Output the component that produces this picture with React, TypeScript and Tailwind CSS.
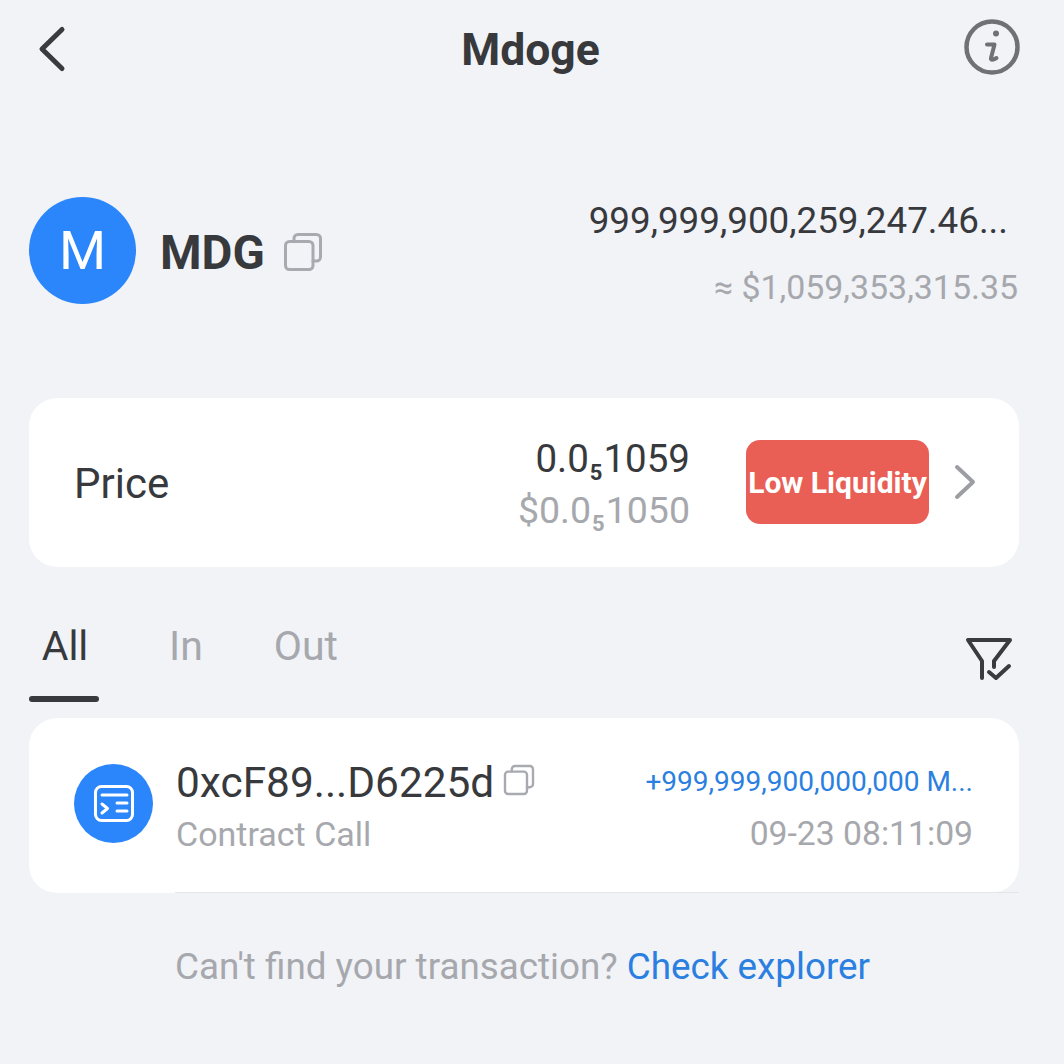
import React from "react";

const font = "font-['Roboto',sans-serif]";

const CopyIcon = ({ className }: { className: string }) => (
  <svg viewBox="0 0 40 40" fill="none" stroke="#a8aaaf" strokeWidth="3" className={className}>
    <path d="M11 9V6.5A4 4 0 0 1 15 2.5h18.5a4 4 0 0 1 4 4V25a4 4 0 0 1-4 4H30" strokeLinecap="round" />
    <rect x="2.5" y="9.5" width="27.5" height="28" rx="4" />
  </svg>
);

const Sub = () => <span className="text-[22px] font-bold align-[-8px] leading-none mx-[1px]">5</span>;

const App = () => {
  return (
    <div className={`${font} w-[1064px] h-[1064px] bg-[#f1f3f7] overflow-hidden text-[#38393d]`}>
      <div className="h-[100px] flex items-center justify-between pl-[36px] pr-[44px]">
        <svg viewBox="0 0 32 50" fill="none" stroke="#3a3b3f" strokeWidth="5" className="w-[32px] h-[50px] -mt-[4px]">
          <path d="M26 6.5 6 26 26 45.5" strokeLinecap="round" strokeLinejoin="round" />
        </svg>
        <div className="text-[44.5px] font-bold mt-[1px] ml-[29px]">Mdoge</div>
        <svg viewBox="0 0 56 56" fill="none" className="w-[56px] h-[56px] -mt-[6px]">
          <circle cx="28" cy="28" r="25.5" stroke="#6f7175" strokeWidth="4.5" />
          <circle cx="32" cy="14.5" r="3" fill="#6f7175" />
          <path d="M23 25.5h7.5L27 39c-.5 2 1.5 2.5 5.5 0" stroke="#6f7175" strokeWidth="4" strokeLinecap="round" strokeLinejoin="round" />
        </svg>
      </div>

      <div className="flex items-start justify-between pl-[29px] pr-[46px] mt-[97px]">
        <div className="flex items-center">
          <div className="w-[107px] h-[107px] rounded-full bg-[#2b85fb] text-white text-[54px] flex items-center justify-center">M</div>
          <div className="text-[47.5px] font-bold ml-[24px] mt-[7px]">MDG</div>
          <CopyIcon className="w-[40px] h-[40px] ml-[18px] mt-[2px]" />
        </div>
        <div className="text-right">
          <div className="text-[36.8px] leading-[46px] mr-[10px] mt-[1px]">999,999,900,259,247.46...</div>
          <div className="text-[33.9px] leading-[46px] text-[#a6a8ad] mt-[21px]">≈ $1,059,353,315.35</div>
        </div>
      </div>

      <div className="ml-[29px] mr-[45px] mt-[87px] h-[169px] bg-white rounded-[28px] flex items-center pl-[45px] pr-[42px]">
        <div className="text-[42px] mt-[1px]">Price</div>
        <div className="ml-auto text-right mt-[2px] mr-[-1px]">
          <div className="text-[38.5px] leading-[50px] mt-[1px]">0.0<Sub />1059</div>
          <div className="text-[37.5px] leading-[50px] text-[#a6a8ad] mt-[1px]">$0.0<Sub />1050</div>
        </div>
        <div className="w-[183px] h-[84px] ml-[57px] -mt-[1px] rounded-[14px] bg-[#e95f56] text-white text-[30px] font-bold flex items-center justify-center whitespace-nowrap">Low Liquidity</div>
        <svg viewBox="0 0 24 36" fill="none" stroke="#9c9ea3" strokeWidth="4" className="w-[24px] h-[36px] ml-[24px] -mt-[1px]">
          <path d="M4 3 20 18 4 33" strokeLinecap="round" strokeLinejoin="round" />
        </svg>
      </div>

      <div className="ml-[29px] mr-[45px] mt-[49px] h-[86px] flex justify-between relative">
        <div className="flex text-[41px] text-[#a6a8ad]">
          <div className="w-[72px] text-center text-[#38393d]">All</div>
          <div className="ml-[68px]">In</div>
          <div className="ml-[71px]">Out</div>
        </div>
        <div className="absolute left-0 bottom-0 w-[70px] h-[6px] rounded-full bg-[#38393d]" />
        <svg viewBox="0 0 48 48" fill="none" stroke="#3a3b3f" strokeWidth="4" strokeLinecap="round" strokeLinejoin="round" className="w-[48px] h-[48px] mr-[6px] mt-[19px]">
          <path d="M17 43V26L3 5h42L29 26v6" />
          <path d="M24 37l7 6 13-12" />
        </svg>
      </div>

      <div className="ml-[29px] mr-[45px] mt-[16px] h-[175px] bg-white rounded-[28px] flex items-center pl-[45px] pr-[46px]">
        <div className="w-[79px] h-[79px] -mt-[4px] rounded-full bg-[#2b85fb] flex items-center justify-center">
          <svg viewBox="0 0 42 39" fill="none" stroke="white" strokeWidth="3" strokeLinecap="round" strokeLinejoin="round" className="w-[42px] h-[39px]">
            <rect x="2.5" y="2.5" width="37" height="34" rx="6" />
            <path d="M9 11h25" />
            <path d="M9 20l5.5 4.5L9 29" />
            <path d="M24 19h10M24 27h10" />
          </svg>
        </div>
        <div className="ml-[23px] mt-[3px]">
          <div className="flex items-center h-[52px] mt-[2px]">
            <span className="text-[42.4px]">0xcF89...D6225d</span>
            <CopyIcon className="w-[32px] h-[32px] ml-[9px] -mt-[5px]" />
          </div>
          <div className="text-[34px] leading-[52px] text-[#a6a8ad] -mt-[1px]">Contract Call</div>
        </div>
        <div className="ml-auto text-right mt-[4px]">
          <div className="text-[28px] leading-[52px] text-[#2b7fe0]">+999,999,900,000,000 M...</div>
          <div className="text-[33.7px] leading-[52px] text-[#a6a8ad]">09-23 08:11:09</div>
        </div>
      </div>

      <div className="ml-[175px] mr-[45px] h-px bg-[#e3e5ea] -mt-px" />

      <div className="mt-[46px] pl-[175px] text-[36.8px] text-[#a6a8ad] whitespace-nowrap">
        Can't find your transaction? <span className="text-[#2b7fe0]">Check explorer</span>
      </div>
    </div>
  );
};

export default App;
